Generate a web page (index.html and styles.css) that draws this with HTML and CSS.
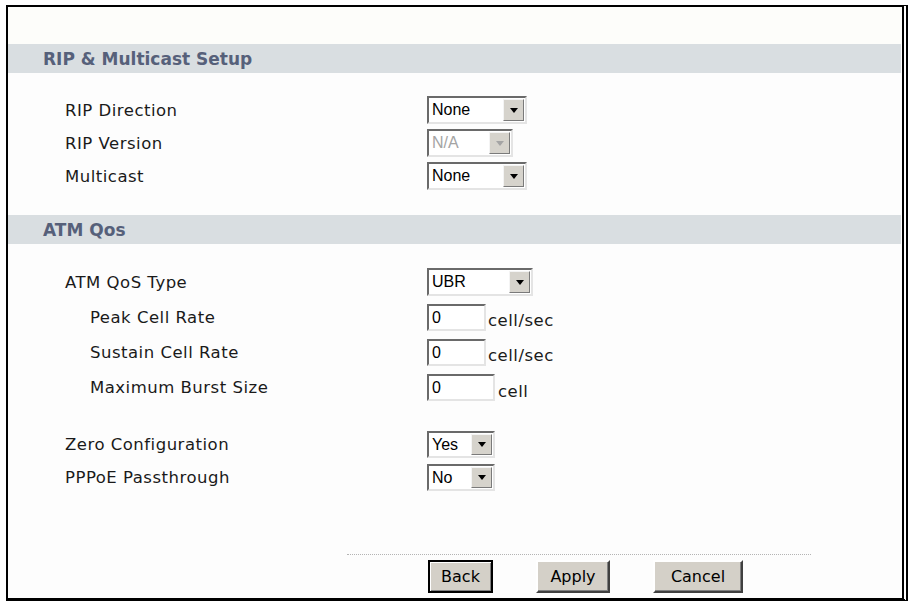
FILE: index.html
```html
<!DOCTYPE html>
<html>
<head>
  <meta charset="utf-8">
  <title>RIP &amp; Multicast Setup</title>
  <link rel="stylesheet" href="styles.css">
</head>
<body>
  <div class="frame">
    <div class="top-gap"></div>

    <div class="band">RIP &amp; Multicast Setup</div>
    <div class="rows rip">
      <div class="row">
        <span class="label">RIP Direction</span>
        <span class="select w-none"><span class="val">None</span><span class="arrow"><i></i></span></span>
      </div>
      <div class="row">
        <span class="label">RIP Version</span>
        <span class="select w-na disabled"><span class="val">N/A</span><span class="arrow"><i></i></span></span>
      </div>
      <div class="row">
        <span class="label">Multicast</span>
        <span class="select w-none"><span class="val">None</span><span class="arrow"><i></i></span></span>
      </div>
    </div>

    <div class="band">ATM Qos</div>
    <div class="rows atm">
      <div class="row tall">
        <span class="label">ATM QoS Type</span>
        <span class="select w-ubr"><span class="val">UBR</span><span class="arrow"><i></i></span></span>
      </div>
      <div class="row">
        <span class="label sub">Peak Cell Rate</span>
        <input class="field w-rate" type="text" value="0"><span class="unit">cell/sec</span>
      </div>
      <div class="row">
        <span class="label sub">Sustain Cell Rate</span>
        <input class="field w-rate" type="text" value="0"><span class="unit">cell/sec</span>
      </div>
      <div class="row">
        <span class="label sub">Maximum Burst Size</span>
        <input class="field w-burst" type="text" value="0"><span class="unit">cell</span>
      </div>
    </div>

    <div class="rows misc">
      <div class="row">
        <span class="label">Zero Configuration</span>
        <span class="select w-yn"><span class="val">Yes</span><span class="arrow"><i></i></span></span>
      </div>
      <div class="row">
        <span class="label">PPPoE Passthrough</span>
        <span class="select w-yn"><span class="val">No</span><span class="arrow"><i></i></span></span>
      </div>
    </div>

    <div class="actions">
      <div class="buttons">
        <button class="btn btn-back">Back</button>
        <button class="btn btn-apply">Apply</button>
        <button class="btn btn-cancel">Cancel</button>
      </div>
    </div>
  </div>
</body>
</html>
```

FILE: styles.css
```css
body {
  margin: 0;
  background-color: #fff;
  font-family: "DejaVu Sans", Verdana, sans-serif;
  color: #1a1a1a;
}

.frame {
  box-sizing: border-box;
  width: 902px;
  height: 596px;
  margin: 5px 0 0 6px;
  border-top: 2px solid #000;
  border-left: 2px solid #000;
  border-bottom: 3px solid #000;
  border-right: 6px double #000;
  background-color: #fdfdfd;
}

.top-gap {
  height: 37px;
  background-color: #fdfdfa;
}

.band {
  height: 29px;
  margin-right: 1px;
  padding-left: 35px;
  background-color: #d9dee1;
  color: #56607a;
  font-size: 17px;
  font-weight: bold;
  line-height: 30px;
}

.rows {
  display: flex;
  flex-direction: column;
  padding-left: 57px;
}

.rip {
  padding-top: 23px;
  padding-bottom: 25px;
  gap: 5px;
}

.rip .row {
  height: 28px;
}

.atm {
  padding-top: 24px;
  gap: 8px;
}

.misc {
  padding-top: 30px;
  gap: 6px;
}

.row {
  display: flex;
  align-items: center;
  height: 27px;
}

.row.tall {
  height: 28px;
}

.label {
  width: 362px;
  font-size: 16.5px;
  letter-spacing: 0.5px;
}

.label.sub {
  box-sizing: border-box;
  padding-left: 25px;
}

/* windows classic style drop-down */
.select {
  box-sizing: border-box;
  display: flex;
  height: 100%;
  border: 2px solid;
  border-color: #6a6a6a #e4e4e4 #e4e4e4 #6a6a6a;
  background-color: #fff;
}

.select .val {
  flex: 1;
  padding-left: 3px;
  font-family: "Liberation Sans", Arial, sans-serif;
  font-size: 16px;
  line-height: 24px;
  color: #000;
}

.select .arrow {
  box-sizing: border-box;
  display: flex;
  align-items: center;
  justify-content: center;
  width: 21px;
  margin: 1px;
  border: 1px solid;
  border-color: #f4f4f4 #7a7a7a #7a7a7a #f4f4f4;
  background-color: #d6d3cc;
}

.select .arrow i {
  width: 0;
  height: 0;
  border-left: 4px solid transparent;
  border-right: 4px solid transparent;
  border-top: 5px solid #000;
}

.select.disabled .val {
  color: #a4a4a4;
}

.select.disabled .arrow i {
  border-top-color: #a4a4a4;
}

.w-none { width: 100px; }
.w-na { width: 86px; }
.w-ubr { width: 106px; }
.w-yn { width: 68px; }

.field {
  box-sizing: border-box;
  height: 27px;
  margin: 0;
  padding: 0 3px;
  border: 2px solid;
  border-color: #6a6a6a #e4e4e4 #e4e4e4 #6a6a6a;
  background-color: #fff;
  font-family: "Liberation Sans", Arial, sans-serif;
  font-size: 16px;
  color: #000;
}

.w-rate { width: 59px; }
.w-burst { width: 68px; }

.unit {
  margin-left: 2px;
  padding-top: 5px;
  font-size: 16.5px;
  letter-spacing: 0.5px;
}

.w-burst + .unit {
  margin-left: 3px;
  padding-top: 7px;
}

.actions {
  margin: 63px 91px 0 339px;
  border-top: 1px dotted #b4b4b4;
  padding-top: 5px;
}

.buttons {
  display: flex;
  padding-left: 81px;
}

.btn {
  box-sizing: border-box;
  height: 33px;
  margin: 0;
  padding: 0;
  border: 2px solid;
  border-color: #fff #404040 #404040 #fff;
  box-shadow: inset -1px -1px 0 #808080;
  background-color: #d4d0c8;
  font-family: "DejaVu Sans", Tahoma, sans-serif;
  font-size: 16px;
  color: #000;
}

.btn-back {
  width: 65px;
  border-color: #000;
  box-shadow: inset 1px 1px 0 #fff, inset -1px -1px 0 #808080;
}

.btn-apply {
  width: 74px;
  margin-left: 43px;
}

.btn-cancel {
  width: 90px;
  margin-left: 43px;
}
```
